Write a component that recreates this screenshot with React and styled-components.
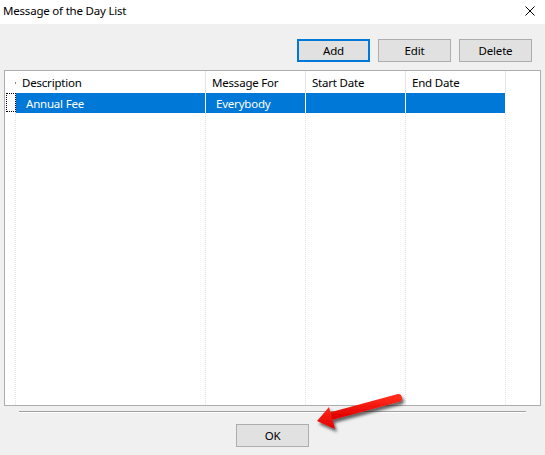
import React from 'react'
import styled, { createGlobalStyle } from 'styled-components'

const columns = [
   { key: 'description', title: 'Description' },
   { key: 'messageFor', title: 'Message For' },
   { key: 'startDate', title: 'Start Date' },
   { key: 'endDate', title: 'End Date' },
]

const rows = [
   { id: 1, description: 'Annual Fee', messageFor: 'Everybody', startDate: '', endDate: '' },
]

const GlobalStyle = createGlobalStyle`
   * { box-sizing: border-box; }
   body {
      margin: 0;
      font-family: 'Noto Sans', 'Liberation Sans', sans-serif;
      font-size: 11.5px;
      letter-spacing: -0.2px;
      color: #000;
   }
`

export default function App() {
   return (
      <>
         <GlobalStyle />
         <Window>
            <TitleBar>
               <Title>Message of the Day List</Title>
               <CloseButton>
                  <svg width="10" height="10" viewBox="0 0 10 10">
                     <path d="M0.5 0.5 L9.5 9.5 M9.5 0.5 L0.5 9.5" stroke="#000" strokeWidth="1" />
                  </svg>
               </CloseButton>
            </TitleBar>
            <Body>
               <Toolbar>
                  <Button $focused>Add</Button>
                  <Button>Edit</Button>
                  <Button>Delete</Button>
               </Toolbar>
               <List>
                  <HeaderRow>
                     <HeaderCell $marker />
                     {columns.map((col) => (
                        <HeaderCell key={col.key}>{col.title}</HeaderCell>
                     ))}
                     <HeaderCell $last />
                  </HeaderRow>
                  {rows.map((row) => (
                     <DataRow key={row.id}>
                        <RowHeader>
                           <FocusRect />
                        </RowHeader>
                        {columns.map((col) => (
                           <DataCell key={col.key} $selected>
                              {row[col.key]}
                           </DataCell>
                        ))}
                        <DataCell $last />
                     </DataRow>
                  ))}
                  <FillerRow>
                     <FillerCell />
                     {columns.map((col) => (
                        <FillerCell key={col.key} />
                     ))}
                     <FillerCell $last />
                  </FillerRow>
               </List>
               <Separator />
               <Footer>
                  <Button>OK</Button>
               </Footer>
            </Body>
            <Annotation viewBox="0 0 545 455">
               <defs>
                  <filter id="shadow" x="-20%" y="-50%" width="150%" height="200%">
                     <feDropShadow dx="2" dy="3" stdDeviation="1.5" floodColor="#000" floodOpacity="0.6" />
                  </filter>
                  <linearGradient id="red" x1="0" y1="0" x2="0" y2="1">
                     <stop offset="0" stopColor="#ff2a1a" />
                     <stop offset="1" stopColor="#e00000" />
                  </linearGradient>
               </defs>
               <g filter="url(#shadow)">
                  <line x1="398" y1="398" x2="328" y2="417" stroke="url(#red)" strokeWidth="8" strokeLinecap="round" />
                  <polygon points="317,421 329,407 335,429" fill="url(#red)" />
               </g>
            </Annotation>
         </Window>
      </>
   )
}

const Window = styled.div`
   position: relative;
   width: 545px;
   height: 455px;
   overflow: hidden;
   background: #f0f0f0;
   display: flex;
   flex-direction: column;
`

const TitleBar = styled.div`
   height: 24px;
   background: #fff;
   display: flex;
   align-items: center;
   justify-content: space-between;
   padding: 0 10px 0 3px;
`

const Title = styled.span`
   font-size: 11.5px;
   line-height: 16px;
   margin-top: -2px;
`

const CloseButton = styled.span`
   display: flex;
   width: 10px;
   height: 10px;
   margin-top: -2px;
`

const Body = styled.div`
   flex: 1;
   display: flex;
   flex-direction: column;
`

const Toolbar = styled.div`
   display: flex;
   justify-content: flex-end;
   gap: 8px;
   padding: 15px 13px 0 0;
`

const Button = styled.div`
   width: 73px;
   height: 23px;
   display: flex;
   align-items: center;
   justify-content: center;
   background: #e1e1e1;
   border: ${(p) => (p.$focused ? '2px solid #0078d7' : '1px solid #adadad')};
`

const List = styled.div`
   margin: 8px 4px 0 4px;
   height: 336px;
   background: #fff;
   border: 1px solid #adadad;
   display: flex;
   flex-direction: column;
`

const gridColumns = '11px 190px 100px 100px 100px 1fr'

const HeaderRow = styled.div`
   display: grid;
   grid-template-columns: ${gridColumns};
   height: 22px;
`

const HeaderCell = styled.div`
   position: relative;
   display: flex;
   align-items: center;
   padding-left: 6px;
   border-right: ${(p) => (p.$last || p.$marker ? 'none' : '1px solid #e5e5e5')};
   white-space: nowrap;

   ${(p) =>
      p.$marker &&
      `
      &::after {
         content: '';
         position: absolute;
         right: 0;
         top: 11px;
         width: 1px;
         height: 2px;
         background: #8a8a8a;
      }
   `}
`

const DataRow = styled.div`
   display: grid;
   grid-template-columns: ${gridColumns};
   height: 20px;
`

const RowHeader = styled.div`
   padding: 0 0 1px 1px;
   border-right: 1px dotted #e3e3e3;
`

const FocusRect = styled.div`
   width: 10px;
   height: 19px;
   border: 1px dotted #000;
`

const DataCell = styled.div`
   display: flex;
   align-items: center;
   padding-left: 10px;
   background: ${(p) => (p.$selected ? '#0078d7' : 'transparent')};
   color: ${(p) => (p.$selected ? '#fff' : '#000')};
   border-right: ${(p) => (p.$last ? 'none' : '1px solid #fff')};
   white-space: nowrap;
`

const FillerRow = styled.div`
   flex: 1;
   display: grid;
   grid-template-columns: ${gridColumns};
`

const FillerCell = styled.div`
   border-right: ${(p) => (p.$last ? 'none' : '1px dotted #e3e3e3')};
`

const Separator = styled.div`
   margin: 5px 19px 0 19px;
   height: 2px;
   border-top: 1px solid #a0a0a0;
   border-bottom: 1px solid #fff;
`

const Footer = styled.div`
   display: flex;
   justify-content: center;
   padding-top: 11px;
`

const Annotation = styled.svg`
   position: absolute;
   left: 0;
   top: 0;
   width: 545px;
   height: 455px;
   pointer-events: none;
`
